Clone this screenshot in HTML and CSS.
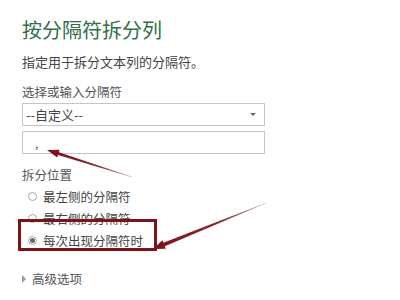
FILE: index.html
```html
<!DOCTYPE html>
<html lang="zh-CN">
<head>
 <meta charset="UTF-8">
 <title>按分隔符拆分列</title>
 <link rel="stylesheet" href="styles.css">
</head>
<body>
 <div class="split-dialog">
  <h1 class="dialog-title">按分隔符拆分列</h1>
  <p class="dialog-desc">指定用于拆分文本列的分隔符。</p>

  <div class="field-label">选择或输入分隔符</div>
  <div class="select-box">
   <span>--自定义--</span>
   <span class="select-arrow"></span>
  </div>
  <div class="text-box">,</div>

  <div class="field-label section">拆分位置</div>
  <div class="radio-list">
   <label class="radio-row"><span class="radio"></span>最左侧的分隔符</label>
   <label class="radio-row"><span class="radio"></span>最右侧的分隔符</label>
   <label class="radio-row"><span class="radio checked"></span>每次出现分隔符时</label>
  </div>

  <div class="advanced"><span class="caret"></span>高级选项</div>
 </div>

 <!-- annotations drawn over the screenshot -->
 <div class="highlight-box"></div>
 <svg class="annotations" width="400" height="300" viewBox="0 0 400 300">
  <defs>
   <linearGradient id="fade1" x1="47" y1="150" x2="132" y2="177" gradientUnits="userSpaceOnUse">
    <stop offset="0" stop-color="#7a1216"/>
    <stop offset="0.6" stop-color="#8a2a2e"/>
    <stop offset="1" stop-color="#c9a0a2"/>
   </linearGradient>
   <linearGradient id="fade2" x1="153" y1="249" x2="266" y2="203" gradientUnits="userSpaceOnUse">
    <stop offset="0" stop-color="#7a1216"/>
    <stop offset="0.6" stop-color="#8a2a2e"/>
    <stop offset="1" stop-color="#d2b4b6"/>
   </linearGradient>
  </defs>
  <polygon fill="url(#fade1)" points="47,150 59.6,149.8 58.9,152.2 132,176.8 132,177.2 58,155 57.2,157.4"/>
  <polygon fill="url(#fade2)" points="153,249 162.4,240.3 163.4,242.8 266,202.7 266,203.3 164.8,246.2 165.8,248.7"/>
 </svg>
</body>
</html>
```

FILE: styles.css
```css
body {
 margin: 0;
 background-color: #fff;
 font-family: "Noto Sans CJK SC", "Noto Sans", sans-serif;
 color: #444;
 width: 400px;
 height: 300px;
 overflow: hidden;
 position: relative;
}

.split-dialog {
 padding: 0 22px;
}

.dialog-title {
 margin: 18px 0 0;
 font-size: 20px;
 line-height: 24px;
 font-weight: normal;
 color: #2f6e49;
}

.dialog-desc {
 margin: 11px 0 0;
 font-size: 13px;
 line-height: 18px;
 color: #444;
}

.field-label {
 margin-top: 12px;
 font-size: 12.5px;
 line-height: 18px;
 color: #555;
}

.field-label.section {
 margin-top: 12px;
}

.select-box {
 box-sizing: border-box;
 width: 243px;
 height: 23px;
 margin-top: 2px;
 border: 1px solid #c6c6c6;
 padding: 0 8px 0 3px;
 display: flex;
 align-items: center;
 justify-content: space-between;
 font-size: 13px;
 color: #444;
}

.select-arrow {
 width: 0;
 height: 0;
 border-left: 3px solid transparent;
 border-right: 3px solid transparent;
 border-top: 3px solid #666;
}

.text-box {
 box-sizing: border-box;
 width: 243px;
 height: 23px;
 margin-top: 5px;
 border: 1px solid #c6c6c6;
 padding: 0 12px;
 font-size: 12px;
 line-height: 21px;
 color: #555;
}

.radio-list {
 margin-top: 1px;
 display: flex;
 flex-direction: column;
}

.radio-row {
 height: 22px;
 display: flex;
 align-items: center;
 gap: 6px;
 padding-left: 6px;
 font-size: 12.5px;
 color: #444;
}

.radio {
 box-sizing: border-box;
 width: 9px;
 height: 9px;
 border: 1px solid #a8a8a8;
 border-radius: 50%;
 display: flex;
 align-items: center;
 justify-content: center;
}

.radio.checked::after {
 content: "";
 width: 5px;
 height: 5px;
 border-radius: 50%;
 background-color: #666;
}

.advanced {
 margin-top: 19px;
 display: flex;
 align-items: center;
 gap: 6px;
 font-size: 12.5px;
 line-height: 18px;
 color: #555;
}

.caret {
 width: 0;
 height: 0;
 border-top: 4px solid transparent;
 border-bottom: 4px solid transparent;
 border-left: 4px solid #999;
}

.highlight-box {
 position: absolute;
 left: 18px;
 top: 219px;
 width: 133px;
 height: 26px;
 border: 3px solid #7b1519;
}

.annotations {
 position: absolute;
 left: 0;
 top: 0;
}
```
